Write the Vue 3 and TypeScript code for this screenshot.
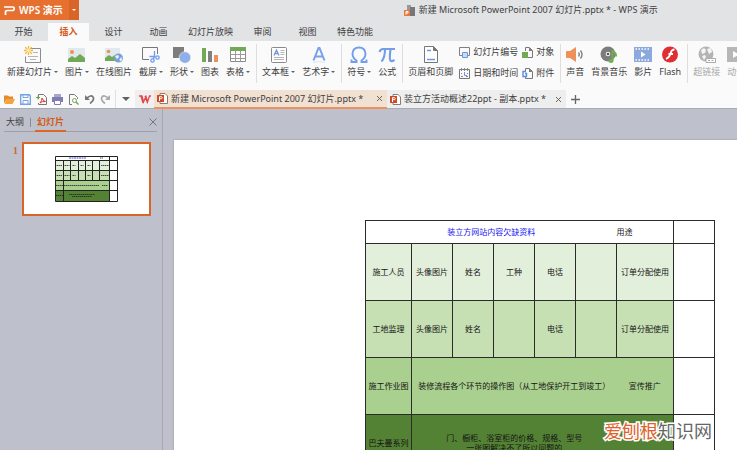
<script setup lang="ts">
interface Tool {
  label: string
  icon: string
  menu?: boolean
  disabled?: boolean
}

interface Cell {
  text: string
  span?: number
  kind?: string
}

interface Row {
  tone: string
  cells: Cell[]
}

const tabs: string[] = ['开始', '插入', '设计', '动画', '幻灯片放映', '审阅', '视图', '特色功能']
const activeTab = '插入'

const picture =
  '<path d="M0 2h17v14H0z" fill="#e2e9ee"/><circle cx="4" cy="6" r="2" fill="#f0914f"/><path d="M0 16v-3l4-3 3 2 5-4 5 4v4z" fill="#71a955"/>'

const icons: Record<string, string> = {
  newSlide:
    '<path d="M6 2.500h10.500v14h-15v-6" fill="none" stroke="#8d8d8d"/><path d="M9 6.500h5M4 10.500h10M6 13.500h6" stroke="#b5b5b5"/><g stroke="#f6b52c" stroke-width="1.300"><path d="M4.500 0v2M4.500 7v2M0 4.500h2M7 4.500h2M1.200 1.200l1.600 1.600M6.200 6.200l1.600 1.600M7.800 1.200L6.200 2.800M2.800 6.200L1.200 7.800"/></g><circle cx="4.500" cy="4.500" r="1.700" fill="#fff" stroke="#f6b52c"/>',
  picture,
  online:
    '<path d="M0 2h15v13H0z" fill="#e2e9ee"/><circle cx="3.500" cy="5.500" r="1.800" fill="#f0914f"/><path d="M0 15v-3l4-3 3 2 3-2v6z" fill="#71a955"/><circle cx="13.500" cy="12" r="4.500" fill="#7b9fd8"/><path d="M10 10l3-1 1 2-2 2zM14.500 13l2-2 .5 3-2 1.500z" fill="#eef4fb"/>',
  capture:
    '<path d="M7 13.500H.5v-12h15V8" fill="none" stroke="#777"/><g fill="none" stroke="#6f9cec" stroke-width="1.300"><path d="M12.500 5v6L11 13M7.500 10.500h6"/><circle cx="10.500" cy="14.500" r="1.700"/><circle cx="15.500" cy="11.500" r="1.700"/></g>',
  shapes: '<path d="M0 1h11v11H0z" fill="#7d7d7d"/><circle cx="12" cy="11.500" r="5.800" fill="#8eafea" stroke="#fafafa" stroke-width=".6"/>',
  chart: '<path d="M1 2h4v14H1z" fill="#71a955"/><path d="M7 5h4v11H7z" fill="#808080"/><path d="M13 9h4v7h-4z" fill="#ed9060"/>',
  table:
    '<path d="M1.500 1.500h15v14h-15z" fill="#fff" stroke="#8a8a8a"/><path d="M1 1h16v4H1z" fill="#71a955"/><path d="M1.500 8.500h15M1.500 12.500h15M6.500 5v10.500M11.500 5v10.500" stroke="#9b9b9b"/>',
  textbox:
    '<rect x="1.500" y="1.500" width="15" height="15" rx="1" fill="#fff" stroke="#8a8a8a"/><path d="M4 9.500l2.500-5.500L9 9.500M5 7.500h3" fill="none" stroke="#7098df" stroke-width="1.300"/><path d="M10.500 4.500h4M10.500 6.500h4M10.500 8.500h4M4 11.500h10M4 13.500h10" stroke="#b5b5b5"/>',
  wordart:
    '<path d="M3.500 14.500L8.500 2h1l5 12.500M5.500 10.500h7" fill="none" stroke="#78a0ec" stroke-width="2"/><path d="M3 16.500q6-2 12 0" fill="none" stroke="#dbe6fa"/>',
  omega:
    '<path d="M1.500 13.500v2.500h5v-1.500Q2.500 12 2.500 7.500 3 1.500 9 1.500t6.500 6q0 4.500-4 7V16h5v-2.500" fill="none" stroke="#739de9" stroke-width="1.900"/>',
  pi: '<path d="M1.500 6q1-3 3.500-3h12" fill="none" stroke="#739de9" stroke-width="2.200"/><path d="M7 3.500q0 8-3.500 12M12.500 3.500q-1 7-.5 10t4.500.500" fill="none" stroke="#739de9" stroke-width="2.100"/>',
  header:
    '<path d="M2.500 .5h9l4 4v12h-13z" fill="#fff" stroke="#777"/><path d="M11.500 .5v4h4" fill="#777" stroke="#777"/><path d="M5 4.500h4M5 13.500h8" stroke="#7098df" stroke-width="1.600"/>',
  sound:
    '<path d="M0 6q0-1 1-1h3l6-4v15l-6-4H1q-1 0-1-1z" fill="#ee9158"/><path d="M12.500 6.500q1.500 2 0 4M14.500 4.500q3 4 0 8" fill="none" stroke="#808080" stroke-width="1.400"/>',
  music:
    '<circle cx="8" cy="8" r="7.500" fill="#7c7c7c"/><circle cx="8" cy="8" r="2.300" fill="#fafafa"/><circle cx="8" cy="8" r="1.300" fill="#555"/><path d="M12.500 4v10.500M12.500 5.500q4 1 3.500 5" fill="none" stroke="#71b04f" stroke-width="2"/><ellipse cx="11" cy="15" rx="2.600" ry="2" fill="#71b04f"/>',
  film:
    '<path d="M0 1h18v15H0z" fill="#8ba9dc"/><path d="M1.500 3h15M1.500 14h15" stroke="#fff" stroke-width="1.300" stroke-dasharray="1.500 1.500"/><path d="M7 5.500l4.500 3-4.500 3z" fill="#fff"/>',
  flash:
    '<circle cx="9" cy="8.500" r="8" fill="#de3030"/><path d="M13.500 3.500q-3 0-4 4t-4.500 5.500M7.500 8h4.500" fill="none" stroke="#fff" stroke-width="1.800"/>',
  link:
    '<circle cx="8" cy="8" r="7.500" fill="#b4b4b4"/><path d="M3 4l3-2 2 2-1 3-3 1zM9 3l4-1 1 4-3 2zM4 10l3-1 1 2-2 3z" fill="#f5f5f5"/><path d="M8 12.500h9.500v4H8z" fill="#fff" stroke="#aaa"/><path d="M10 14.500h2M13.500 14.500h2" stroke="#aaa"/>',
  action: '<path d="M0 1h18v15H0z" fill="#b7b7b7"/><path d="M6 5l6 3.500-6 3.500z" fill="#fff"/>',
}

const insertTools: Tool[][] = [
  [
    { label: '新建幻灯片', icon: 'newSlide', menu: true },
    { label: '图片', icon: 'picture', menu: true },
    { label: '在线图片', icon: 'online' },
    { label: '截屏', icon: 'capture', menu: true },
    { label: '形状', icon: 'shapes', menu: true },
    { label: '图表', icon: 'chart' },
    { label: '表格', icon: 'table', menu: true },
  ],
  [
    { label: '文本框', icon: 'textbox', menu: true },
    { label: '艺术字', icon: 'wordart', menu: true },
  ],
  [
    { label: '符号', icon: 'omega', menu: true },
    { label: '公式', icon: 'pi' },
  ],
]

const mediaTools: Tool[][] = [
  [
    { label: '声音', icon: 'sound' },
    { label: '背景音乐', icon: 'music' },
    { label: '影片', icon: 'film' },
    { label: 'Flash', icon: 'flash' },
  ],
  [
    { label: '超链接', icon: 'link', disabled: true },
    { label: '动作', icon: 'action', disabled: true },
  ],
]

const smallTools: Tool[] = [
  {
    label: '幻灯片编号',
    icon: '<path d="M3 8.500H.5v-8h10v8H9" fill="none" stroke="#808080"/><path d="M3.500 5.500h5v5h-5z" fill="#c9daf8" stroke="#6f96dc"/>',
  },
  {
    label: '对象',
    icon: '<path d="M3.500 4V.5h4l3 3v7H6" fill="none" stroke="#777"/><path d="M7 .5v3.500h3.500z" fill="#777"/><path d="M0 5h6v6H0z" fill="#71a955"/>',
  },
  {
    label: '日期和时间',
    icon: '<path d="M.5 1.500h10v9H.5z" fill="none" stroke="#777"/><path d="M2.500 0v3M5.500 0v3M8.500 0v3M2 8.500h2M7 8.500h2M2 5.500h1M8 5.500h1" stroke="#888"/><path d="M5.500 4v3.500H8" fill="none" stroke="#6f96dc"/>',
  },
  {
    label: '附件',
    icon: '<path d="M3.500 3V.5h4l3 3v7h-7V9" fill="none" stroke="#777"/><path d="M7 .5v3.500h3.500z" fill="#777"/><path d="M4 3.500H1v5h3.500v-3H3" fill="none" stroke="#5c8be6" stroke-width="1.400"/>',
  },
]

const quickTools: Tool[] = [
  { label: '打开', icon: '<path d="M0 9.500V1.500h4l1 1h4V5H3z" fill="#e38a2c"/><path d="M3 5h8l-2.500 5H.5z" fill="#f5a43c"/>' },
  { label: '保存', icon: '<path d="M.7.700h8.600l1 1v8.600H.7z" fill="#fff" stroke="#76a2e6" stroke-width="1.400"/><path d="M3 .5v3h5v-3M3 10V6.500h5V10" fill="none" stroke="#76a2e6"/>' },
  { label: '输出为PDF', icon: '<path d="M2.500 5V.500h5l3 3v7h-8V9" fill="none" stroke="#777"/><path d="M0 3.500h4M2 1.500v4" stroke="#71a955"/><path d="M4 9q2-2 2-5 1 3 3.500 3.500Q6 7 4 9z" fill="none" stroke="#df3b36"/>' },
  { label: '打印', icon: '<path d="M2 0h7v3H2z" fill="#a9a5cf"/><path d="M0 3h11v5H0z" fill="#7f7bb3"/><path d="M2.500 6.500h6v4h-6z" fill="#fff" stroke="#7f7bb3"/>' },
  { label: '打印预览', icon: '<path d="M4 10.500H1.500v-10h5l3 3V5" fill="none" stroke="#777"/><circle cx="6.500" cy="6.500" r="2" fill="none" stroke="#71a955"/><path d="M8 8l2.500 2.500" stroke="#71a955" stroke-width="1.500"/>' },
  { label: '撤销', icon: '<path d="M1 1v5h5z" fill="#777"/><path d="M3 4q4-3.500 6-1t-3 6.500" fill="none" stroke="#777" stroke-width="1.700"/>' },
  { label: '恢复', icon: '<path d="M10 1v5H5z" fill="#aaa"/><path d="M8 4Q4 .5 2 3t3 6.500" fill="none" stroke="#aaa" stroke-width="1.700"/>' },
]

const fileIcon =
  '<path d="M3 .5h5l2.500 2.500v7.500H3z" fill="#fff" stroke="#8b7a72"/><path d="M0 2h7v7H0z" fill="#cf4a26"/><path d="M2.500 8V3.700h1.700q1 0 1 1t-1 1H2.500" fill="none" stroke="#fff"/>'

const rows: Row[] = [
  {
    tone: 'white',
    cells: [{ text: '装立方网站内容欠缺资料', span: 6, kind: 'open title' }, { text: '用途', kind: 'start' }, { text: '', kind: 'blank' }],
  },
  {
    tone: 'pale',
    cells: ['施工人员', '头像图片', '姓名', '工种', '电话', '', '订单分配使用'].map((text): Cell => ({ text })).concat({ text: '', kind: 'blank' }),
  },
  {
    tone: 'light',
    cells: ['工地监理', '头像图片', '姓名', '', '电话', '', '订单分配使用'].map((text): Cell => ({ text })).concat({ text: '', kind: 'blank' }),
  },
  {
    tone: 'mid',
    cells: [
      { text: '施工作业图' },
      { text: '装修流程各个环节的操作图（从工地保护开工到竣工）', span: 5, kind: 'open' },
      { text: '宣传推广' },
      { text: '', kind: 'blank' },
    ],
  },
  {
    tone: 'deep',
    cells: [
      { text: '巴夫曼系列' },
      { text: '门、橱柜、浴室柜的价格、规格、型号\n一张图解决不了所以问题的', span: 5, kind: 'open' },
      { text: '' },
      { text: '', kind: 'blank' },
    ],
  },
]
</script>

<template>
  <div class="app">
    <header class="titlebar">
      <button class="brand" type="button">
        <svg width="11" height="9" viewBox="0 0 11 9"><path d="M0 1h9q1.200 0 1.200 1.500T9 4.500H3.500Q1.500 4.500 1.500 6v3" fill="none" stroke="#fff" stroke-width="1.700" /></svg>
        <span>WPS 演示</span>
      </button>
      <button class="brand-menu" type="button" aria-label="菜单"><i class="caret"></i></button>
      <h1 class="doc-title">
        <svg width="11" height="11" viewBox="0 0 11 11"><path d="M3 0h4v5H3z" fill="#999" /><path d="M6 2h5v9H6z" fill="#777" /><path d="M0 5h6v6H0z" fill="#e8793f" /><path d="M2 9.500V6.500h2v1.500H2" fill="none" stroke="#fff" /></svg>
        <span>新建 Microsoft PowerPoint 2007 幻灯片.pptx * - WPS 演示</span>
      </h1>
    </header>

    <nav class="tabs">
      <button v-for="t in tabs" :key="t" type="button" class="tab" :class="{ active: t === activeTab }">{{ t }}</button>
    </nav>

    <section class="ribbon">
      <div v-for="(group, g) in insertTools" :key="g" class="group">
        <button v-for="tool in group" :key="tool.label" type="button" class="tool">
          <svg class="big" viewBox="0 0 18 18" v-html="icons[tool.icon]"></svg>
          <span class="label">{{ tool.label }}<i v-if="tool.menu" class="caret"></i></span>
        </button>
      </div>
      <div class="group mixed">
        <button type="button" class="tool">
          <svg class="big" viewBox="0 0 18 18" v-html="icons.header"></svg>
          <span class="label">页眉和页脚</span>
        </button>
        <div class="small-grid">
          <button v-for="tool in smallTools" :key="tool.label" type="button" class="small-tool">
            <svg width="11" height="11" viewBox="0 0 11 11" v-html="tool.icon"></svg>
            <span>{{ tool.label }}</span>
          </button>
        </div>
      </div>
      <div v-for="(group, g) in mediaTools" :key="'m' + g" class="group media">
        <button v-for="tool in group" :key="tool.label" type="button" class="tool" :disabled="tool.disabled">
          <svg class="big" viewBox="0 0 18 18" v-html="icons[tool.icon]"></svg>
          <span class="label">{{ tool.label }}</span>
        </button>
      </div>
    </section>

    <div class="docbar">
      <div class="quick">
        <button v-for="tool in quickTools" :key="tool.label" type="button" :aria-label="tool.label">
          <svg width="11" height="11" viewBox="0 0 11 11" v-html="tool.icon"></svg>
        </button>
      </div>
      <button class="more" type="button" aria-label="更多"><i class="caret large"></i></button>
      <button class="home" type="button" aria-label="WPS">
        <svg width="12" height="9" viewBox="0 0 12 9"><path d="M0 1h3l1.500 6L7 1.500 8.500 7l2-6H12M2 1l2 7M6 1l2.500 7" fill="none" stroke="#e5484c" stroke-width="1.300" /></svg>
      </button>
      <div class="doc active">
        <svg width="11" height="11" viewBox="0 0 11 11" v-html="fileIcon"></svg>
        <span>新建 Microsoft PowerPoint 2007 幻灯片.pptx *</span>
        <button class="close" type="button" aria-label="关闭"><svg width="7" height="7" viewBox="0 0 7 7"><path d="M1 1l5 5M6 1L1 6" stroke="#666" /></svg></button>
      </div>
      <div class="doc second">
        <svg width="11" height="11" viewBox="0 0 11 11" v-html="fileIcon"></svg>
        <span>装立方活动概述22ppt - 副本.pptx *</span>
        <button class="close" type="button" aria-label="关闭"><svg width="7" height="7" viewBox="0 0 7 7"><path d="M1 1l5 5M6 1L1 6" stroke="#666" /></svg></button>
      </div>
      <button class="add" type="button" aria-label="新建"><svg width="9" height="9" viewBox="0 0 9 9"><path d="M4.500 0v9M0 4.500h9" stroke="#666" stroke-width="1.300" /></svg></button>
    </div>

    <main class="workspace">
      <aside class="outline">
        <div class="outline-head">
          <button type="button">大纲</button>
          <i class="bar"></i>
          <button type="button" class="current">幻灯片</button>
          <button type="button" class="close" aria-label="关闭"><svg width="8" height="8" viewBox="0 0 8 8"><path d="M.5.500l7 7M7.500.500l-7 7" stroke="#70747e" /></svg></button>
        </div>
        <div class="thumb-row">
          <span class="num">1</span>
          <button class="thumb" type="button" aria-label="幻灯片 1">
            <svg width="63" height="46" viewBox="0 0 63 46">
              <path d="M.5.500h62v45H.5z" fill="#fff" />
              <path d="M0 5h55v10H0z" fill="#e2efda" />
              <path d="M0 15h55v10H0z" fill="#c6e0b4" />
              <path d="M0 25h55v10H0z" fill="#a9d08e" />
              <path d="M0 35h55v10H0z" fill="#548235" />
              <path d="M.5.500h62v45H.5zM54.500.500v45M.5 4.500h62M.5 14.500h62M.5 24.500h62M.5 34.500h62M8.500 4.500v41M15.500 4.500v20M23.500 4.500v20M30.500 4.500v20M37.500 4.500v20M44.500 4.500v20" fill="none" stroke="#222" />
              <path d="M14 2h17" stroke="#5555e0" stroke-dasharray="2 .5" />
              <path d="M45 2h3M1.500 9.500h6M9.500 9.500h5M17.500 9.500h3M25.500 9.500h3M32.500 9.500h3M46 9.500h8M1.500 19.500h6M9.500 19.500h5M17.500 19.500h3M32.500 19.500h3M46 19.500h8M1 29.500h7M9 29.500h35M47 29.500h6M1 39.500h7M14 38.500h26M17 40.500h20" stroke="#222" stroke-opacity=".8" stroke-dasharray="1.500 .5" />
            </svg>
          </button>
        </div>
      </aside>

      <section class="canvas">
        <div class="slide">
          <table class="sheet">
            <colgroup>
              <col class="c-name" />
              <col v-for="n in 5" :key="n" class="c-mid" />
              <col class="c-use" />
              <col class="c-end" />
            </colgroup>
            <tbody>
              <tr v-for="row in rows" :key="row.tone" :class="row.tone">
                <td v-for="(cell, i) in row.cells" :key="i" :colspan="cell.span" :class="cell.kind">{{ cell.text }}</td>
              </tr>
            </tbody>
          </table>
        </div>
      </section>
      <p class="watermark"><b>爱刨根</b><span>知识网</span></p>
    </main>
  </div>
</template>

<style>
body {
  margin: 0;
}
</style>

<style scoped>
.app {
  display: flex;
  flex-direction: column;
  height: 100vh;
  overflow: hidden;
  background: #e2e3e5;
  color: #404040;
  font: 9px/12px 'Noto Sans', 'Noto Sans CJK SC', sans-serif;
}

button {
  display: flex;
  align-items: center;
  justify-content: center;
  padding: 0;
  border: 0;
  background: none;
  color: inherit;
  font: inherit;
  white-space: nowrap;
}

svg {
  display: block;
  flex: none;
}

.caret {
  display: inline-block;
  flex: none;
  border: 2px solid transparent;
  border-top-color: #606060;
  border-bottom: 0;
}

.caret.large {
  border-width: 4px 4px 0;
}

.titlebar {
  display: flex;
  flex: none;
  height: 23px;
}

.brand {
  gap: 4px;
  height: 20px;
  padding: 0 6px 0 4px;
  background: #e5702f;
  color: #fff;
  font-size: 10px;
  font-weight: 600;
}

.brand-menu {
  width: 10px;
  height: 20px;
  background: #d9642a;
}

.brand-menu .caret {
  border-top-color: #fff;
}

.doc-title {
  display: flex;
  align-items: center;
  gap: 4px;
  height: 20px;
  margin: 0 0 0 325px;
  font-size: 9px;
  font-weight: 400;
  white-space: nowrap;
}

.tabs {
  display: flex;
  flex: none;
  height: 18px;
  padding-left: 1px;
}

.tab {
  box-sizing: border-box;
  min-width: 41px;
  margin: 0 2px;
  padding: 0 5px;
}

.tab.active {
  background: #fafafa;
  color: #d35a17;
  font-weight: 700;
}

.ribbon {
  display: flex;
  flex: none;
  height: 49px;
  padding-left: 2px;
  background: #fafafa;
  overflow: hidden;
}

.group {
  display: flex;
  flex: none;
  align-items: flex-start;
  gap: 7px;
  height: 37px;
  margin-top: 3px;
  padding: 2px 6px 0 5px;
  border-right: 1px solid #dedede;
}

.group.mixed {
  gap: 6px;
}

.group.media:last-child {
  border-right: 0;
}

.tool {
  flex-direction: column;
  gap: 2px;
}

.big {
  width: 18px;
  height: 18px;
}

.label {
  display: flex;
  align-items: center;
  gap: 2px;
}

.tool:disabled {
  color: #a9a9a9;
}

.small-grid {
  display: grid;
  grid-template-columns: auto auto;
  gap: 9px 4px;
}

.small-tool {
  justify-content: flex-start;
  gap: 3px;
}

.docbar {
  display: flex;
  flex: none;
  height: 18px;
  background: #fafafa;
  border-bottom: 1px solid #a9acb5;
}

.quick {
  display: flex;
  align-items: center;
  gap: 5px;
  padding: 0 4px;
}

.more {
  width: 20px;
  border-left: 1px solid #e0e0e0;
}

.home {
  width: 19px;
  background: #f0efef;
}

.doc {
  display: flex;
  flex: none;
  align-items: center;
  gap: 3px;
  box-sizing: border-box;
  padding: 0 4px 0 3px;
  white-space: nowrap;
}

.doc.active {
  width: 233px;
  margin-bottom: -1px;
  background: #f1e1d2;
  border-bottom: 2px solid #ee9160;
}

.doc.second {
  width: 179px;
  background: #eeeeee;
}

.doc .close {
  margin-left: auto;
}

.add {
  width: 18px;
}

.workspace {
  position: relative;
  display: flex;
  flex: 1;
  min-height: 0;
  background: #bec1cb;
}

.outline {
  flex: none;
  box-sizing: border-box;
  width: 163px;
  padding: 4px 5px 0 4px;
  border-right: 1px solid #a6a9b4;
}

.outline-head {
  display: flex;
  align-items: stretch;
  height: 18px;
  border-bottom: 1px solid #9da0aa;
}

.outline-head button {
  padding: 0 2px;
}

.outline-head .bar {
  align-self: center;
  width: 1px;
  height: 9px;
  margin: 0 4px;
  background: #8a8d97;
}

.outline-head .current {
  margin-bottom: -1px;
  border-bottom: 2px solid #dd6526;
  color: #d35a17;
  font-weight: 700;
}

.outline-head .close {
  margin-left: auto;
  padding: 0;
}

.thumb-row {
  display: flex;
  align-items: flex-start;
  gap: 4px;
  margin-top: 10px;
  padding: 0 6px 0 9px;
}

.num {
  padding-top: 3px;
  color: #d9622a;
  font-family: 'Liberation Serif', serif;
  font-size: 10px;
  font-weight: 700;
}

.thumb {
  flex: 1;
  height: 74px;
  border: 2px solid #d9652b;
  background: #fff;
}

.canvas {
  flex: 1;
  min-width: 0;
  padding: 31px 0 0 11px;
  overflow: hidden;
}

.slide {
  height: 100%;
  padding: 80px 0 0 191px;
  background: #fff;
  box-shadow: 0 0 2px #8f929c;
}

.sheet {
  width: 350px;
  border-collapse: collapse;
  table-layout: fixed;
  color: #141414;
  font-size: 8px;
  line-height: 10px;
}

.c-name {
  width: 46px;
}

.c-mid {
  width: 41px;
}

.c-use {
  width: 57px;
}

.c-end {
  width: 41px;
}

.sheet td {
  height: 56px;
  padding: 0;
  border: 1px solid #2b2b2b;
  text-align: center;
  vertical-align: middle;
  white-space: pre;
}

.sheet .white td {
  height: 22px;
}

.sheet td.open {
  border-right-width: 0;
}

.sheet td.open + td {
  border-left-width: 0;
}

.sheet td.title {
  color: #1414f0;
}

.sheet td.start {
  text-align: left;
}

.pale {
  background: #e2efda;
}

.light {
  background: #c6e0b4;
}

.mid {
  background: #a9d08e;
}

.deep {
  background: #548235;
}

.sheet td.blank {
  background: #fff;
}

.watermark {
  position: absolute;
  right: 25px;
  bottom: 7px;
  margin: 0;
  color: #666;
  font-size: 18px;
  line-height: 24px;
  -webkit-text-stroke: 3px #fff;
  paint-order: stroke fill;
}

.watermark b {
  color: #e0622a;
  font-weight: 400;
}
</style>
